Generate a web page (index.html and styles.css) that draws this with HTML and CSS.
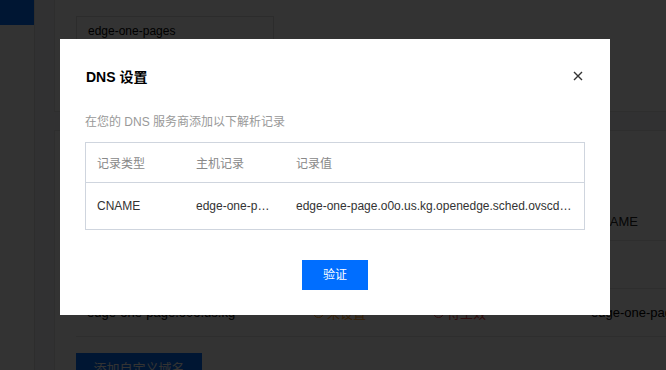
FILE: index.html
```html
<!DOCTYPE html>
<html>
<head>
  <title>DNS 设置</title>
  <link rel="stylesheet" href="styles.css">
</head>
<body>
  <div class="layout">
    <!-- Sidebar -->
    <div class="sidebar">
      <div class="sidebar-item active"></div>
    </div>
    <!-- Main content behind the dialog -->
    <div class="main">
      <div class="card card-top">
        <div class="name-input">edge-one-pages</div>
      </div>
      <div class="card card-domains">
        <div class="domain-row domain-head">
          <span class="cell cell-name"></span>
          <span class="cell cell-status"></span>
          <span class="cell cell-status"></span>
          <span class="cell cell-cname">CNAME</span>
        </div>
        <div class="domain-row"></div>
        <div class="domain-row">
          <span class="cell cell-name">edge-one-page.o0o.us.kg</span>
          <span class="cell cell-status warn"><i class="dot"></i>未设置</span>
          <span class="cell cell-status error"><i class="dot"></i>待生效</span>
          <span class="cell cell-cname">edge-one-page.o0o.us.kg</span>
        </div>
        <a class="add-button" href="#">添加自定义域名</a>
      </div>
    </div>
  </div>

  <!-- DNS dialog -->
  <div class="mask">
    <div class="dialog">
      <div class="dialog-header">
        <span class="dialog-title">DNS 设置</span>
        <svg class="dialog-close" width="10" height="10" viewBox="0 0 10 10">
          <path d="M1 1 L9 9 M9 1 L1 9" stroke="#333" stroke-width="1.4" fill="none"/>
        </svg>
      </div>
      <div class="dialog-desc">在您的 DNS 服务商添加以下解析记录</div>
      <div class="record-table">
        <div class="record-row record-head">
          <span class="record-cell">记录类型</span>
          <span class="record-cell">主机记录</span>
          <span class="record-cell">记录值</span>
        </div>
        <div class="record-row">
          <span class="record-cell">CNAME</span>
          <span class="record-cell">edge-one-page.o0o.us.kg</span>
          <span class="record-cell record-value">edge-one-page.o0o.us.kg.openedge.sched.ovscdns.com</span>
        </div>
      </div>
      <div class="dialog-footer">
        <a class="verify-button" href="#">验证</a>
      </div>
    </div>
  </div>
</body>
</html>
```

FILE: styles.css
```css
/*Page*/
body {
  margin: 0;
  height: 370px;
  overflow: hidden;
  font-family: "Liberation Sans", Arial, "Noto Sans CJK SC", sans-serif;
  font-size: 12px;
  color: #000;
  background-color: #f3f4f7;
}
.layout {
  display: flex;
  height: 370px;
}
/*Sidebar*/
.sidebar {
  width: 34px;
  flex-shrink: 0;
  background-color: #fff;
  border-right: 1px solid #e2e2e2;
}
.sidebar-item {
  height: 25px;
}
.sidebar-item.active {
  background-color: #006eff;
}
/*Main area*/
.main {
  flex: 1;
  min-width: 0;
  overflow: hidden;
  padding-left: 19px;
}
.card {
  background-color: #fff;
  border-left: 1px solid #e5e5e5;
}
.card-top {
  height: 95px;
  padding: 16px 0 0 21px;
  border-bottom: 1px solid #e5e5e5;
}
.name-input {
  width: 198px;
  height: 30px;
  padding-left: 11px;
  line-height: 28px;
  border: 1px solid #dcdcdc;
  box-sizing: border-box;
  font-size: 12px;
}
.card-domains {
  margin-top: 18px;
  height: 300px;
  padding: 0 0 0 21px;
  border-top: 1px solid #e5e5e5;
}
.domain-row {
  display: flex;
  align-items: center;
  height: 47px;
  border-bottom: 1px solid #e5e5e5;
}
.domain-head {
  height: 110px;
  align-items: flex-end;
  padding-bottom: 11px;
  box-sizing: border-box;
  color: #222;
}
.cell {
  flex-shrink: 0;
  white-space: nowrap;
  font-size: 13px;
}
.cell-name {
  width: 226px;
  padding-left: 11px;
}
.cell-status {
  width: 120px;
  display: flex;
  align-items: center;
  gap: 3px;
}
.cell-cname {
  width: 200px;
  padding-left: 38px;
}
.warn {
  color: #ff9c19;
}
.error {
  color: #e54545;
}
.dot {
  width: 9px;
  height: 9px;
  border: 1px solid currentColor;
  border-radius: 50%;
}
.add-button {
  display: inline-block;
  margin-top: 16px;
  width: 126px;
  height: 32px;
  line-height: 32px;
  text-align: center;
  background-color: #006eff;
  color: #fff;
  font-size: 13px;
  text-decoration: none;
}
/*Mask and dialog*/
.mask {
  position: fixed;
  top: 0;
  left: 0;
  right: 0;
  bottom: 0;
  background-color: rgba(0, 0, 0, 0.8);
}
.dialog {
  position: absolute;
  top: 39px;
  left: 60px;
  width: 550px;
  box-sizing: border-box;
  padding: 25px 25px 25px;
  background-color: #fff;
}
.dialog-header {
  display: flex;
  justify-content: space-between;
  align-items: center;
  height: 24px;
}
.dialog-title {
  padding-left: 1px;
  font-size: 14px;
  font-weight: bold;
  color: #000;
}
.dialog-close {
  margin-right: 2px;
}
.dialog-desc {
  margin-top: 25px;
  line-height: 18px;
  color: #999;
}
/*Record table*/
.record-table {
  margin-top: 11px;
  border: 1px solid #cfd5de;
}
.record-row {
  display: grid;
  grid-template-columns: 99px 100px 1fr;
  align-items: center;
  height: 46px;
  color: #333;
}
.record-head {
  height: 39px;
  color: #888;
  border-bottom: 1px solid #cfd5de;
}
.record-cell {
  padding: 0 13px 0 11px;
  white-space: nowrap;
  overflow: hidden;
  text-overflow: ellipsis;
}
.record-value {
  padding-right: 10px;
}
/*Footer*/
.dialog-footer {
  display: flex;
  justify-content: center;
  margin-top: 30px;
}
.verify-button {
  width: 66px;
  height: 30px;
  line-height: 30px;
  text-align: center;
  background-color: #006eff;
  color: #fff;
  text-decoration: none;
}
```
